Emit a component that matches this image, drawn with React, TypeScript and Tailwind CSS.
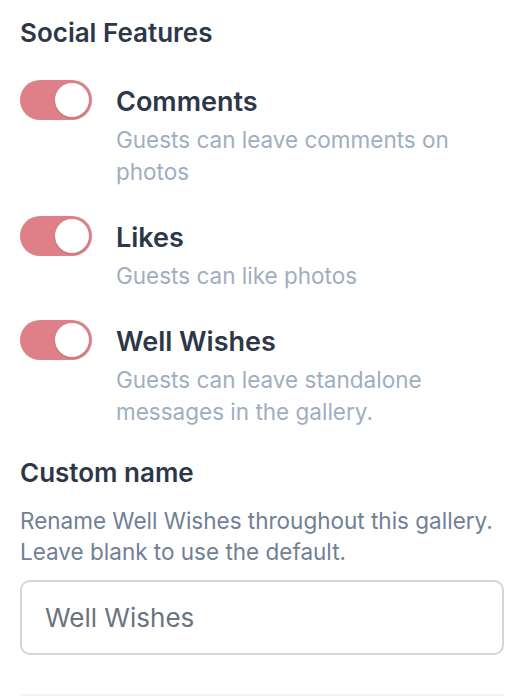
import { useState } from 'react'

type Feature = {
  key: string
  label: string
  description: string
}

const features: Feature[] = [
  { key: 'comments', label: 'Comments', description: 'Guests can leave comments on photos' },
  { key: 'likes', label: 'Likes', description: 'Guests can like photos' },
  { key: 'wishes', label: 'Well Wishes', description: 'Guests can leave standalone messages in the gallery.' },
]

function Toggle({ on, onChange }: { on: boolean; onChange: () => void }) {
  return (
    <button
      type="button"
      onClick={onChange}
      className={`relative shrink-0 w-[72px] h-[40px] rounded-full transition-colors ${on ? 'bg-[#df8088]' : 'bg-gray-300'}`}
    >
      <span
        className={`absolute top-[3px] w-[34px] h-[34px] rounded-full bg-white shadow-[0_1px_2px_rgba(0,0,0,0.15)] transition-all ${on ? 'left-[35px]' : 'left-[3px]'}`}
      />
    </button>
  )
}

export default function App() {
  const [enabled, setEnabled] = useState<Record<string, boolean>>({
    comments: true,
    likes: true,
    wishes: true,
  })
  const [customName, setCustomName] = useState('')

  return (
    <div className="min-h-screen bg-white font-['Inter',sans-serif]">
      <div className="px-5 pt-[16px]">
        {/* Header */}
        <h2 className="text-[26px] leading-[34px] font-semibold text-[#2d3748]">Social Features</h2>

        {/* Toggles */}
        <div className="mt-[30px] flex flex-col gap-[28px]">
          {features.map((f) => (
            <div key={f.key} className="flex items-start gap-[24px]">
              <Toggle
                on={enabled[f.key]}
                onChange={() => setEnabled({ ...enabled, [f.key]: !enabled[f.key] })}
              />
              <div className="pr-[40px]">
                <div className="text-[27px] leading-[44px] font-semibold text-[#2d3748]">{f.label}</div>
                <p className="text-[22.5px] leading-[32px] text-[#a0aec0]">{f.description}</p>
              </div>
            </div>
          ))}
        </div>

        {/* Custom name */}
        <div className="mt-[28px]">
          <label htmlFor="customName" className="block text-[26px] leading-[34px] font-semibold text-[#2d3748]">
            Custom name
          </label>
          <p className="mt-[15px] text-[22.5px] leading-[31px] text-[#718096]">
            Rename Well Wishes throughout this gallery. Leave blank to use the default.
          </p>
          <input
            id="customName"
            value={customName}
            onChange={(e) => setCustomName(e.target.value)}
            placeholder="Well Wishes"
            className="mt-[13px] w-full h-[75px] px-[23px] rounded-[10px] border-2 border-[#d2d6dc] text-[26px] text-[#4a5568] placeholder:text-[#6b7280] outline-none"
          />
        </div>

        <div className="mt-[39px] border-t-2 border-[#f3f4f6]" />
      </div>
    </div>
  )
}
